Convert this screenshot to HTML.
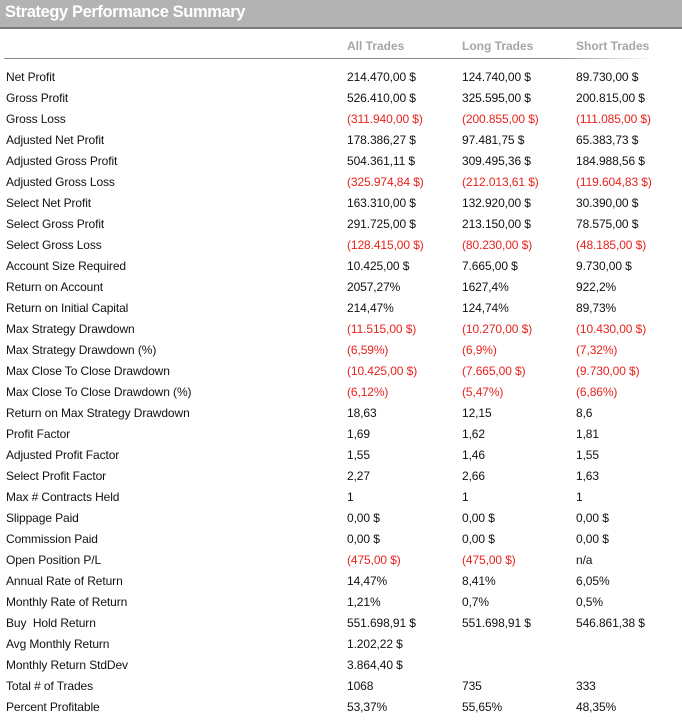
<!DOCTYPE html>
<html><head><meta charset="utf-8"><style>
html,body{margin:0;padding:0;background:#fff;width:682px;height:728px;overflow:hidden;font-family:"Liberation Sans",sans-serif;}
.hdr{position:absolute;left:0;top:0;width:682px;height:27px;background:#b3b3b3;border-bottom:2px solid #7a7a7a;}
.hdr span{position:absolute;left:5px;top:3px;color:#fff;font-weight:bold;font-size:16.5px;letter-spacing:-0.4px;}
.ch{position:absolute;top:39px;color:#a6a6a6;font-weight:bold;font-size:12px;}
.sep{position:absolute;left:4px;top:58px;width:650px;height:1px;background:linear-gradient(to right,#8a8a80 85%,#fff);}
.r{position:absolute;left:0;height:21px;font-size:12px;color:#111;line-height:21px;width:682px;letter-spacing:-0.1px;}
.r span{position:absolute;top:0;}
.a{left:347px}.l{left:462px}.s{left:576px}.n{left:6px}
.red{color:#e8231d}
</style></head><body>
<div class="hdr"><span>Strategy Performance Summary</span></div>
<div class="ch" style="left:347px">All Trades</div>
<div class="ch" style="left:462px">Long Trades</div>
<div class="ch" style="left:576px">Short Trades</div>
<div class="sep"></div>
<div id="rows"></div>
<script>
var d=[
["Net Profit","214.470,00 $","124.740,00 $","89.730,00 $"],
["Gross Profit","526.410,00 $","325.595,00 $","200.815,00 $"],
["Gross Loss","(311.940,00 $)","(200.855,00 $)","(111.085,00 $)",1],
["Adjusted Net Profit","178.386,27 $","97.481,75 $","65.383,73 $"],
["Adjusted Gross Profit","504.361,11 $","309.495,36 $","184.988,56 $"],
["Adjusted Gross Loss","(325.974,84 $)","(212.013,61 $)","(119.604,83 $)",1],
["Select Net Profit","163.310,00 $","132.920,00 $","30.390,00 $"],
["Select Gross Profit","291.725,00 $","213.150,00 $","78.575,00 $"],
["Select Gross Loss","(128.415,00 $)","(80.230,00 $)","(48.185,00 $)",1],
["Account Size Required","10.425,00 $","7.665,00 $","9.730,00 $"],
["Return on Account","2057,27%","1627,4%","922,2%"],
["Return on Initial Capital","214,47%","124,74%","89,73%"],
["Max Strategy Drawdown","(11.515,00 $)","(10.270,00 $)","(10.430,00 $)",1],
["Max Strategy Drawdown (%)","(6,59%)","(6,9%)","(7,32%)",1],
["Max Close To Close Drawdown","(10.425,00 $)","(7.665,00 $)","(9.730,00 $)",1],
["Max Close To Close Drawdown (%)","(6,12%)","(5,47%)","(6,86%)",1],
["Return on Max Strategy Drawdown","18,63","12,15","8,6"],
["Profit Factor","1,69","1,62","1,81"],
["Adjusted Profit Factor","1,55","1,46","1,55"],
["Select Profit Factor","2,27","2,66","1,63"],
["Max # Contracts Held","1","1","1"],
["Slippage Paid","0,00 $","0,00 $","0,00 $"],
["Commission Paid","0,00 $","0,00 $","0,00 $"],
["Open Position P/L","(475,00 $)","(475,00 $)","n/a",2],
["Annual Rate of Return","14,47%","8,41%","6,05%"],
["Monthly Rate of Return","1,21%","0,7%","0,5%"],
["Buy  Hold Return","551.698,91 $","551.698,91 $","546.861,38 $"],
["Avg Monthly Return","1.202,22 $","",""],
["Monthly Return StdDev","3.864,40 $","",""],
["Total # of Trades","1068","735","333"],
["Percent Profitable","53,37%","55,65%","48,35%"]];
var h="";
d.forEach(function(r,i){
var ca=r[4]?' red':'',cs=r[4]==1?' red':'';
h+='<div class="r" style="top:'+(67+i*21)+'px"><span class="n">'+r[0].replace(/  /g,"&nbsp; ")+'</span><span class="a'+ca+'">'+r[1]+'</span><span class="l'+ca+'">'+r[2]+'</span><span class="s'+cs+'">'+r[3]+'</span></div>';
});
document.getElementById("rows").innerHTML=h;
</script>
</body></html>
